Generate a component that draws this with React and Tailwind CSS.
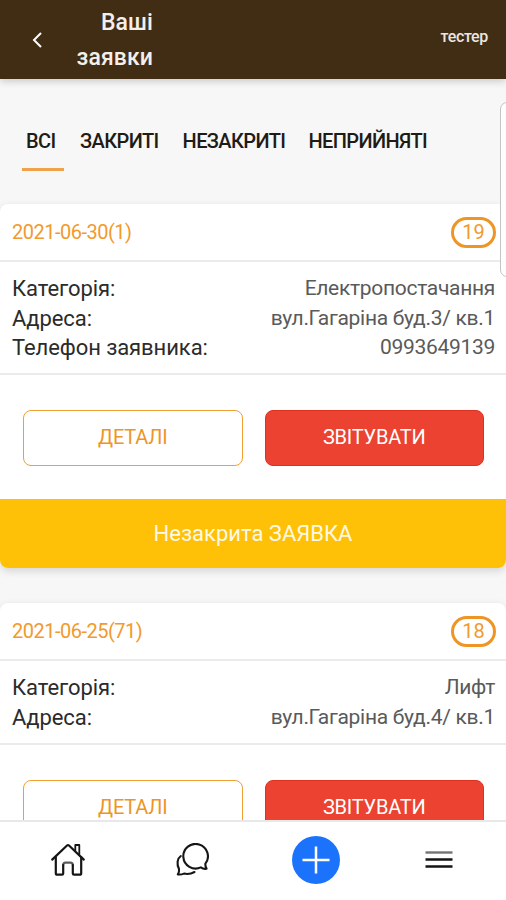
import React, { useState } from "react";

const tabs = [
  { label: "ВСІ", pad: "pl-[4px] mr-[12px] w-[42px]" },
  { label: "ЗАКРИТІ", pad: "px-[4px] mr-[16px]" },
  { label: "НЕЗАКРИТІ", pad: "px-[4px] mr-[15px]" },
  { label: "НЕПРИЙНЯТІ", pad: "px-[4px]" },
];

const requests = [
  {
    date: "2021-06-30(1)",
    count: 19,
    rows: [
      ["Категорія:", "Електропостачання"],
      ["Адреса:", "вул.Гагаріна буд.3/ кв.1"],
      ["Телефон заявника:", "0993649139"],
    ],
    status: "Незакрита ЗАЯВКА",
  },
  {
    date: "2021-06-25(71)",
    count: 18,
    rows: [
      ["Категорія:", "Лифт"],
      ["Адреса:", "вул.Гагаріна буд.4/ кв.1"],
    ],
  },
];

function Header() {
  return (
    <header className="relative z-10 flex h-[79px] shrink-0 items-start bg-[#412d14] text-white shadow-[0_2px_8px_rgba(0,0,0,0.2)]">
      <svg className="mt-[32px] ml-[32px] h-[16px] w-[10px]" viewBox="0 0 10 16" fill="none" stroke="currentColor" strokeWidth="2">
        <path d="M9 1 2 8l7 7" />
      </svg>
      <h1 className="mt-[5px] ml-[21px] w-[90px] text-right text-[23px] leading-[35px] font-medium tracking-[0.1px] text-[#f3f0ec]">
        Ваші заявки
      </h1>
      <span className="mt-[27px] mr-[18px] ml-auto text-[16px] leading-[20px] font-medium tracking-[-0.3px] text-[#eae6e1]">тестер</span>
    </header>
  );
}

function RequestCard({ date, count, rows, status }) {
  return (
    <section className="mb-[35px] overflow-hidden rounded-[8px] bg-white shadow-[0_3px_8px_rgba(0,0,0,0.14)]">
      <div className="flex h-[58px] items-center justify-between border-b-2 border-[#ebebeb] pr-[11px] pl-[12px] text-[#f19a2e]">
        <span className="pb-px text-[20px] tracking-[-0.5px]">{date}</span>
        <span className="-mr-px flex h-[31px] w-[45px] items-center justify-center rounded-full border-3 border-[#ef9526] text-[20px]">
          {count}
        </span>
      </div>
      <div className="border-b-2 border-[#ebebeb] pt-[12px] pr-[11px] pb-[10px] pl-[12px]">
        {rows.map(([label, value]) => (
          <div key={label} className="flex justify-between leading-[29.7px]">
            <span className="text-[22px] tracking-[-0.08px] text-[#2b2b2b]">{label}</span>
            <span className="text-[21px] tracking-[-0.3px] text-[#5a5a5a]">{value}</span>
          </div>
        ))}
      </div>
      <div className="flex gap-[22px] pt-[35px] pr-[22px] pb-[33px] pl-[23px]">
        <button className="h-[56px] flex-1 rounded-[8px] border-[1.5px] border-[#efa033] pb-[2px] text-[20px] tracking-[-0.2px] text-[#ee9526]">
          ДЕТАЛІ
        </button>
        <button className="h-[56px] flex-1 rounded-[8px] border border-[#e0301f] bg-[#eb4231] pb-[2px] text-[20px] tracking-[-0.2px] text-white">
          ЗВІТУВАТИ
        </button>
      </div>
      {status && (
        <div className="flex h-[69px] items-center justify-center bg-[#fec107] text-[22px] text-[#fff8e6]">
          {status}
        </div>
      )}
    </section>
  );
}

function BottomNav() {
  return (
    <nav className="relative z-10 grid h-[80px] shrink-0 grid-cols-[136px_112px_135px_1fr] items-center justify-items-center border-t-2 border-[#e8e8e8] bg-white pb-[2px] text-[#151515]">
      <svg className="h-[34px] w-[36px]" viewBox="0 0 36 34" fill="none" stroke="currentColor" strokeWidth="2.2" strokeLinecap="round" strokeLinejoin="round">
        <path d="M2.200 16.600 17 2.500q1-.9 2 0L33.800 16.600" />
        <path d="M5.800 14V30.200q0 1.500 1.500 1.500h4.600q1.300 0 1.300-1.300V22" />
        <path d="M31.200 14V30.200q0 1.500-1.500 1.500h-5.600q-1.300 0-1.300-1.300V22" />
        <path d="M13.200 22q0-2.400 2.400-2.400h4.800q2.400 0 2.400 2.400" strokeOpacity="0.7" />
        <path d="M25.300 7.500V2h4V11.500" strokeWidth="1.800" />
      </svg>
      <svg className="h-[34px] w-[34px]" viewBox="0 0 34 34" fill="none" stroke="currentColor" strokeWidth="2.1" strokeLinejoin="round" strokeLinecap="round">
        <path d="M25.800 24.400c1.700 1.200 3.600 1.700 5.800 1.300-1-1.400-1.400-3-1.200-5A12.300 12.300 0 1 0 25.800 24.400Z" />
        <path d="M5.800 13C2.200 15.500 1.500 21 4 26c.3 2-.1 3.700-1.200 5.400 2.200.3 4.300 0 6.200-.8 3.800.9 7 .4 10.500-1.600" />
      </svg>
      <button className="flex h-[48px] w-[48px] items-center justify-center rounded-full bg-[#1c73fb] text-white">
        <svg className="h-[28px] w-[28px]" viewBox="0 0 28 28" stroke="currentColor" strokeWidth="2.5">
          <path d="M14 .5v27M.5 14h27" />
        </svg>
      </button>
      <svg className="mr-[11px] h-[18px] w-[28px]" viewBox="0 0 28 18" stroke="currentColor" strokeWidth="2.4">
        <path d="M.5 1.500h27" strokeOpacity="0.6" />
        <path d="M.5 8.500h27M.5 15.500h27" />
      </svg>
    </nav>
  );
}

export default function App() {
  const [active, setActive] = useState(0);

  return (
    <div className="relative flex h-[900px] w-[506px] flex-col overflow-hidden bg-[#f7f7f7] font-[Roboto,sans-serif]">
      <Header />
      <main className="min-h-0 flex-1 overflow-hidden">
        <div className="flex pt-[47px] pb-[33px] pl-[22px]">
          {tabs.map((tab, i) => (
            <button
              key={tab.label}
              onClick={() => setActive(i)}
              className={`h-[45px] border-b-[3px] pb-[12px] text-left text-[20px] font-medium tracking-[-0.6px] whitespace-nowrap text-[#211b16] ${tab.pad} ${
                i === active ? "border-[#f0a24b]" : "border-transparent"
              }`}
            >
              {tab.label}
            </button>
          ))}
        </div>
        {requests.map(r => (
          <RequestCard key={r.date} {...r} />
        ))}
      </main>
      <BottomNav />
      {/* edge drawer handle, sits over the list */}
      <div className="absolute top-[102px] -right-[10px] z-20 h-[175px] w-[16px] rounded-[7px] border border-[#c4c4c4] bg-[#fdfdfd]" />
    </div>
  );
}
